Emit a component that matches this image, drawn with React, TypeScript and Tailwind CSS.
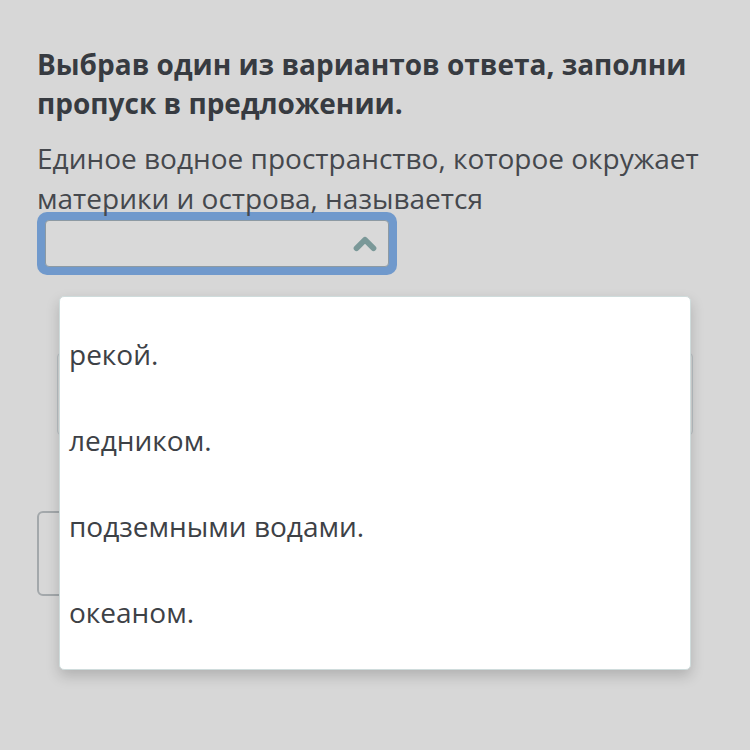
import { ChevronUp } from 'lucide-react'

const options = ['рекой.', 'ледником.', 'подземными водами.', 'океаном.']

export default function App() {
  return (
    <div
      className="relative w-[750px] h-[750px] overflow-hidden bg-[#d7d7d7]"
      style={{ fontFamily: '"Open Sans", "Noto Sans", sans-serif' }}
    >
      <div className="pl-[37px] pr-[30px] pt-[45px]">
        {/* Question */}
        <h1 className="text-[28px] leading-[39px] font-bold text-[#373b41]">
          Выбрав один из вариантов ответа, заполни пропуск в предложении.
        </h1>
        <p className="mt-[15px] text-[28px] leading-[40px] text-[#45484d]">
          Единое водное пространство, которое окружает материки и острова, называется
        </p>

        {/* Select, open */}
        <div className="-mt-[6px] w-[360px] h-[63px] rounded-[10px] bg-[#7099cc] p-[8px]">
          <div className="h-full rounded-[4px] bg-[#d9d9d9] border border-[#8d9aa3] flex items-center justify-end pr-[6px]">
            <ChevronUp className="w-[34px] h-[34px] text-[#7a9898]" strokeWidth={4} />
          </div>
        </div>

        {/* Content behind the menu */}
        <div className="mt-[78px] ml-[20px] mr-[27px] h-[82px] rounded-[4px] border border-[#b9c1c4] bg-[#d7d7d7]" />
        <div className="mt-[76px] w-[200px] h-[85px] rounded-[6px] border-2 border-[#a3a8ab]" />
      </div>

      {/* Options menu */}
      <div className="absolute left-[59px] top-[296px] w-[632px] h-[374px] bg-white rounded-[5px] border border-[#cfdcdc] shadow-[0_6px_14px_rgba(0,0,0,0.18)] pt-[14px]">
        {options.map((opt) => (
          <div
            key={opt}
            className="h-[86px] flex items-center pl-[9px] text-[28px] text-[#3d4146]"
          >
            {opt}
          </div>
        ))}
      </div>
    </div>
  )
}
